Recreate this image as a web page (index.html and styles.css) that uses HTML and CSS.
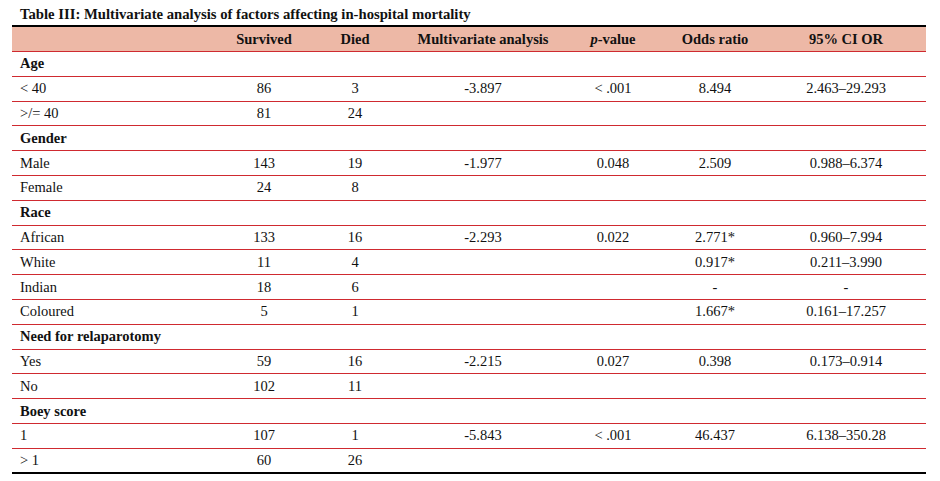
FILE: index.html
```html
<!DOCTYPE html>
<html>
<head>
<meta charset="utf-8">
<link rel="stylesheet" href="styles.css">
</head>
<body>
<div class="wrap">
  <div class="title">Table III: Multivariate analysis of factors affecting in-hospital mortality</div>
  <table class="tbl">
    <colgroup>
      <col class="c1"><col class="c2"><col class="c3"><col class="c4"><col class="c5"><col class="c6"><col class="c7">
    </colgroup>
    <thead>
      <tr><th></th><th>Survived</th><th>Died</th><th>Multivariate analysis</th><th><i>p</i>-value</th><th>Odds ratio</th><th class="last">95% CI OR</th></tr>
    </thead>
    <tbody>
      <tr class="grp"><td>Age</td><td></td><td></td><td></td><td></td><td></td><td class="last"></td></tr>
      <tr><td>&lt; 40</td><td>86</td><td>3</td><td>-3.897</td><td>&lt; .001</td><td>8.494</td><td class="last">2.463–29.293</td></tr>
      <tr><td>&gt;/= 40</td><td>81</td><td>24</td><td></td><td></td><td></td><td class="last"></td></tr>
      <tr class="grp"><td>Gender</td><td></td><td></td><td></td><td></td><td></td><td class="last"></td></tr>
      <tr><td>Male</td><td>143</td><td>19</td><td>-1.977</td><td>0.048</td><td>2.509</td><td class="last">0.988–6.374</td></tr>
      <tr><td>Female</td><td>24</td><td>8</td><td></td><td></td><td></td><td class="last"></td></tr>
      <tr class="grp"><td>Race</td><td></td><td></td><td></td><td></td><td></td><td class="last"></td></tr>
      <tr><td>African</td><td>133</td><td>16</td><td>-2.293</td><td>0.022</td><td>2.771*</td><td class="last">0.960–7.994</td></tr>
      <tr><td>White</td><td>11</td><td>4</td><td></td><td></td><td>0.917*</td><td class="last">0.211–3.990</td></tr>
      <tr><td>Indian</td><td>18</td><td>6</td><td></td><td></td><td>-</td><td class="last">-</td></tr>
      <tr><td>Coloured</td><td>5</td><td>1</td><td></td><td></td><td>1.667*</td><td class="last">0.161–17.257</td></tr>
      <tr class="grp"><td>Need for relaparotomy</td><td></td><td></td><td></td><td></td><td></td><td class="last"></td></tr>
      <tr><td>Yes</td><td>59</td><td>16</td><td>-2.215</td><td>0.027</td><td>0.398</td><td class="last">0.173–0.914</td></tr>
      <tr><td>No</td><td>102</td><td>11</td><td></td><td></td><td></td><td class="last"></td></tr>
      <tr class="grp"><td>Boey score</td><td></td><td></td><td></td><td></td><td></td><td class="last"></td></tr>
      <tr><td>1</td><td>107</td><td>1</td><td>-5.843</td><td>&lt; .001</td><td>46.437</td><td class="last">6.138–350.28</td></tr>
      <tr class="end"><td>&gt; 1</td><td>60</td><td>26</td><td></td><td></td><td></td><td class="last"></td></tr>
    </tbody>
  </table>
</div>
</body>
</html>
```

FILE: styles.css
```css
html, body {
  margin: 0;
  padding: 0;
  background: #ffffff;
}
body {
  font-family: "Liberation Serif", "Times New Roman", serif;
  color: #111111;
}
.wrap {
  padding: 3px 14px 0 12px;
}
.title {
  font-weight: bold;
  font-size: 14.7px;
  line-height: 22px;
  padding-left: 8px;
  color: #111;
}
.tbl {
  width: 914px;
  border-collapse: separate;
  border-spacing: 0;
  table-layout: fixed;
  border-top: 2px solid #000;
  font-size: 14.5px;
}
.c1 { width: 192px; }
.c2 { width: 120px; }
.c3 { width: 62px; }
.c4 { width: 194px; }
.c5 { width: 66px; }
.c6 { width: 138px; }
.c7 { width: 142px; }
.tbl th, .tbl td {
  padding: 0;
  height: 24.8px;
  box-sizing: border-box;
  text-align: center;
  border-bottom: 1px solid #cf2a30;
  white-space: nowrap;
  vertical-align: middle;
}
.tbl th {
  background: #edb8a6;
  font-weight: bold;
  height: 25px;
}
.tbl th:first-child, .tbl td:first-child {
  text-align: left;
  padding-left: 8px;
}
.tbl .last {
  padding-right: 18px;
}
.tbl tr.grp td {
  font-weight: bold;
}
.tbl tr.end td {
  border-bottom: 2px solid #000;
}
```
